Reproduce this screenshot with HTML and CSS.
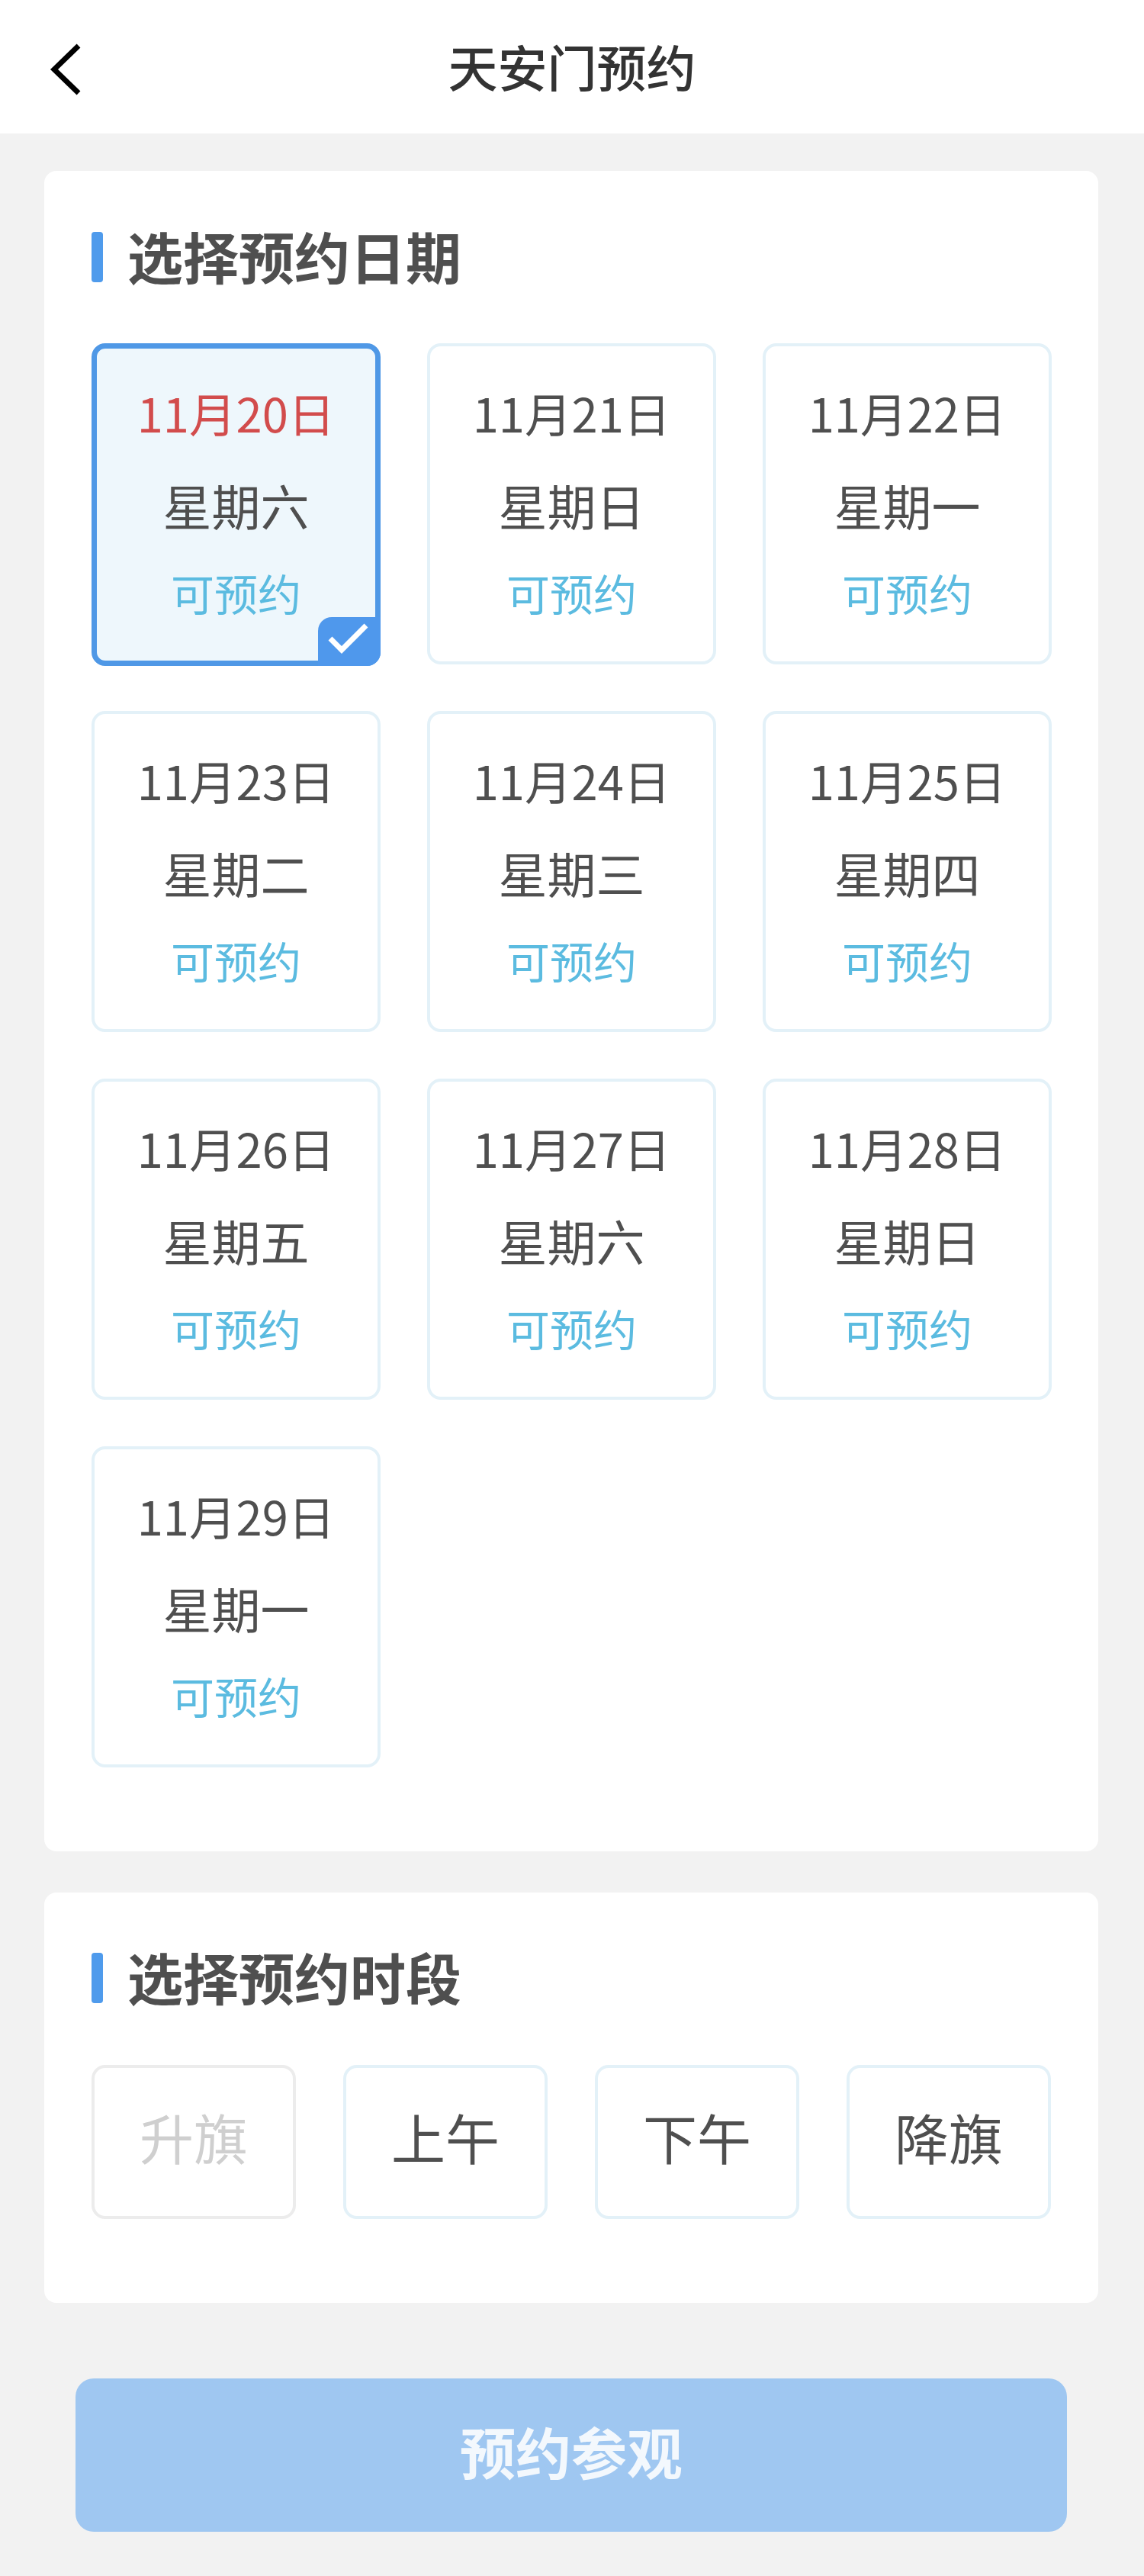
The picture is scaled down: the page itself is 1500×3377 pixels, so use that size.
FILE: index.html
```html
<!DOCTYPE html>
<html lang="zh-CN">
<head>
<meta charset="utf-8">
<title>天安门预约</title>
<link rel="stylesheet" href="styles.css">
</head>
<body>
<header class="topbar">
  <svg class="back" viewBox="0 0 44 70" width="44" height="70"><path d="M39 4 L7 35 L39 66" fill="none" stroke="#000" stroke-width="7"/></svg>
  <h1 class="topbar-title">天安门预约</h1>
</header>
<main class="content">
  <section class="panel panel-dates">
    <h2 class="section-title">选择预约日期</h2>
    <div class="date-grid">
      <div class="date-card selected">
        <div class="date today">11月20日</div><div class="weekday">星期六</div><div class="status">可预约</div>
        <span class="check"><svg viewBox="0 0 82 64" width="82" height="64"><path d="M16 28 L31 43 L63 11" fill="none" stroke="#fff" stroke-width="7"/></svg></span>
      </div>
      <div class="date-card"><div class="date">11月21日</div><div class="weekday">星期日</div><div class="status">可预约</div></div>
      <div class="date-card"><div class="date">11月22日</div><div class="weekday">星期一</div><div class="status">可预约</div></div>
      <div class="date-card"><div class="date">11月23日</div><div class="weekday">星期二</div><div class="status">可预约</div></div>
      <div class="date-card"><div class="date">11月24日</div><div class="weekday">星期三</div><div class="status">可预约</div></div>
      <div class="date-card"><div class="date">11月25日</div><div class="weekday">星期四</div><div class="status">可预约</div></div>
      <div class="date-card"><div class="date">11月26日</div><div class="weekday">星期五</div><div class="status">可预约</div></div>
      <div class="date-card"><div class="date">11月27日</div><div class="weekday">星期六</div><div class="status">可预约</div></div>
      <div class="date-card"><div class="date">11月28日</div><div class="weekday">星期日</div><div class="status">可预约</div></div>
      <div class="date-card"><div class="date">11月29日</div><div class="weekday">星期一</div><div class="status">可预约</div></div>
    </div>
  </section>
  <section class="panel panel-times">
    <h2 class="section-title">选择预约时段</h2>
    <div class="time-row">
      <div class="time disabled">升旗</div>
      <div class="time">上午</div>
      <div class="time">下午</div>
      <div class="time">降旗</div>
    </div>
  </section>
  <button class="submit" type="button">预约参观</button>
</main>
</body>
</html>
```

FILE: styles.css
```css
* { box-sizing: border-box; }
html, body { margin: 0; padding: 0; }
body {
  width: 1500px;
  min-height: 3377px;
  background: #f2f2f2;
  font-family: "Noto Sans CJK SC", "Noto Sans", sans-serif;
  color: #4f4f4f;
}
.topbar {
  height: 175px;
  background: #fff;
  display: flex;
  align-items: center;
  justify-content: center;
  position: relative;
}
.back { position: absolute; left: 64px; top: 56px; }
.topbar-title {
  margin: 0 0 4px;
  font-size: 65px;
  font-weight: 500;
  line-height: 90px;
  color: #333;
}
.content { padding: 49px 60px 0 58px; }
.panel {
  background: #fff;
  border-radius: 16px;
  padding: 0 60px 0 62px;
}
.panel-dates { height: 2203px; padding-top: 80px; }
.panel-times { height: 538px; margin-top: 54px; padding-top: 79px; }
.section-title {
  margin: 0;
  height: 68px;
  display: flex;
  align-items: flex-start;
  font-size: 73px;
  font-weight: 700;
  line-height: 60px;
  color: #4f4f4f;
}
.section-title::before {
  content: "";
  width: 15px;
  height: 66px;
  border-radius: 4px;
  background: #4f9bec;
  margin-right: 32px;
}
.date-grid {
  display: grid;
  grid-template-columns: repeat(3, 379px);
  grid-auto-rows: 421px;
  column-gap: 61px;
  row-gap: 61px;
  margin-top: 78px;
}
.date-card {
  position: relative;
  border: 4px solid #e3f1f8;
  border-radius: 18px;
  padding-top: 27px;
  text-align: center;
  background: #fff;
}
.date-card.selected {
  border: 7px solid #4f98e6;
  padding-top: 24px;
  background: #eef7fc;
  height: 423px;
}
.date { font-size: 61.5px; line-height: 120px; white-space: nowrap; }
.today { color: #d24c4c; }
.weekday { font-size: 64px; line-height: 121px; }
.status { font-size: 57px; line-height: 108px; color: #5bbbe0; }
.check {
  position: absolute;
  right: -7px;
  bottom: -7px;
  width: 82px;
  height: 64px;
  background: #4f98ec;
  border-radius: 18px 0 18px 0;
  display: block;
}
.check svg { display: block; }
.time-row {
  display: grid;
  grid-template-columns: repeat(4, 268px);
  column-gap: 62px;
  margin-top: 79px;
}
.time {
  height: 202px;
  border: 4px solid #e3f1f8;
  border-radius: 18px;
  display: flex;
  align-items: center;
  justify-content: center;
  padding-bottom: 16px;
  font-size: 71px;
  color: #4f4f4f;
}
.time.disabled { border-color: #ececec; color: #cfcfcf; }
.submit {
  display: flex;
  align-items: center;
  justify-content: center;
  width: 1300px;
  height: 201px;
  margin: 99px 0 0 41px;
  padding: 0 0 14px;
  border: 0;
  border-radius: 24px;
  background: #9fc7f1;
  color: #f3f8fd;
  font-family: inherit;
  font-size: 73px;
  font-weight: 700;
}
```
